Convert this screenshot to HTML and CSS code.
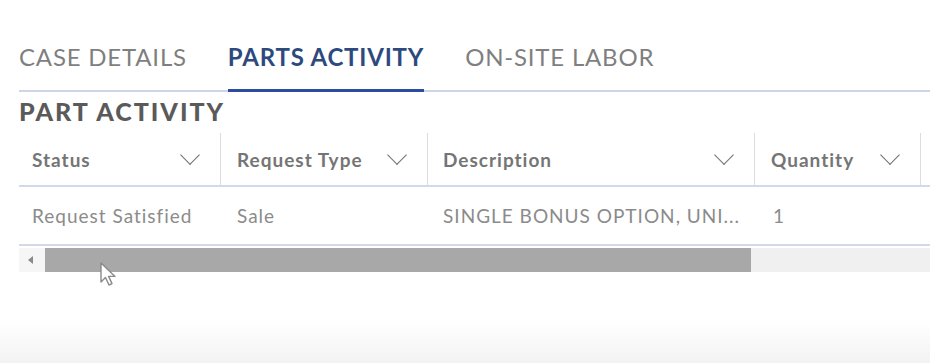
FILE: index.html
```html
<!DOCTYPE html>
<html lang="en">
<head>
    <meta charset="UTF-8">
    <meta name="viewport" content="width=device-width, initial-scale=1.0">
    <title>Parts Activity</title>
    <link rel="stylesheet" href="styles.css">
</head>
<body>
    <div class="page">
        <nav class="tabs">
            <a class="tab">CASE DETAILS</a>
            <a class="tab active">PARTS ACTIVITY</a>
            <a class="tab">ON-SITE LABOR</a>
        </nav>

        <h2 class="section-title">PART ACTIVITY</h2>

        <div class="grid">
            <div class="row head">
                <div class="cell c-status">Status <span class="chev"></span></div>
                <div class="cell c-type">Request Type <span class="chev"></span></div>
                <div class="cell c-desc">Description <span class="chev"></span></div>
                <div class="cell c-qty">Quantity <span class="chev"></span></div>
                <div class="cell c-rest"></div>
            </div>
            <div class="row body">
                <div class="cell c-status">Request Satisfied</div>
                <div class="cell c-type">Sale</div>
                <div class="cell c-desc">SINGLE BONUS OPTION, UNI...</div>
                <div class="cell c-qty">1</div>
                <div class="cell c-rest"></div>
            </div>
            <div class="hscroll">
                <div class="hscroll-btn"><span class="tri"></span></div>
                <div class="hscroll-thumb"></div>
            </div>
        </div>
    </div>

    <!-- mouse pointer from the recording -->
    <svg class="pointer" width="20" height="26" viewBox="0 0 20 26">
        <path d="M2 2 L2 21 L6.5 16.5 L10 24 L13 22.6 L9.6 15.4 L16 15.4 Z" fill="#fff" stroke="#8a8a8a" stroke-width="1.4" stroke-linejoin="round"/>
    </svg>
</body>
</html>
```

FILE: styles.css
```css
body {
    margin: 0;
    font-family: Lato, "Open Sans", sans-serif;
    background: linear-gradient(to bottom, #ffffff 0, #ffffff 320px, #f3f3f3 363px);
    min-height: 363px;
    color: #7a7a7a;
}

.page {
    padding: 43px 0 0 19px;
}

.tabs {
    display: flex;
    gap: 41px;
    border-bottom: 2px solid #cdd6e6;
}

.tab {
    font-size: 24px;
    line-height: 28px;
    color: #7f7f7f;
    padding: 0 0 19px;
    letter-spacing: 0.8px;
}

.tab.active {
    color: #2d4a7e;
    font-weight: 700;
    letter-spacing: 0.8px;
    border-bottom: 3px solid #2c4c9c;
    margin-bottom: -2px;
    padding-bottom: 18px;
}

.section-title {
    margin: 5px 0 0;
    font-size: 25px;
    line-height: 28px;
    font-weight: 900;
    color: #5a5a5a;
    letter-spacing: 2px;
}

.grid {
    margin-top: 8px;
}

.row {
    display: flex;
    border-bottom: 2px solid #d2dae7;
}

.cell {
    display: flex;
    align-items: center;
    flex-shrink: 0;
    box-sizing: border-box;
    white-space: nowrap;
}

.row.head .cell {
    height: 52px;
    justify-content: space-between;
    font-weight: 700;
    font-size: 19px;
    letter-spacing: 1px;
    color: #757575;
    border-right: 1px solid #dcdcdc;
    padding-right: 21px;
}

.row.body .cell {
    height: 57px;
    font-size: 19px;
    letter-spacing: 1px;
    color: #8b8b8b;
}

.c-status { width: 202px; padding-left: 13px; }
.c-type { width: 207px; padding-left: 16px; }
.c-desc { width: 327px; padding-left: 15px; }
.c-qty { width: 166px; padding-left: 16px; }
.row .c-rest { flex: 1; flex-shrink: 1; padding: 0; border-right: none; }

.row.body .c-qty { padding-left: 18px; }

.chev {
    width: 13px;
    height: 13px;
    border-right: 1.8px solid #707070;
    border-bottom: 1.8px solid #707070;
    transform: rotate(45deg);
    margin-top: -9px;
    margin-right: 2px;
}

.hscroll {
    display: flex;
    height: 24px;
    background: #f0f0f0;
    margin-top: 2px;
}

.hscroll-btn {
    width: 26px;
    background: #f6f6f6;
    display: flex;
    align-items: center;
    justify-content: center;
}

.tri {
    width: 0;
    height: 0;
    border-top: 4px solid transparent;
    border-bottom: 4px solid transparent;
    border-right: 5px solid #8a8a8a;
    margin-left: -4px;
}

.hscroll-thumb {
    width: 706px;
    background: #a8a8a8;
}

.pointer {
    position: absolute;
    left: 99px;
    top: 261px;
}
```
